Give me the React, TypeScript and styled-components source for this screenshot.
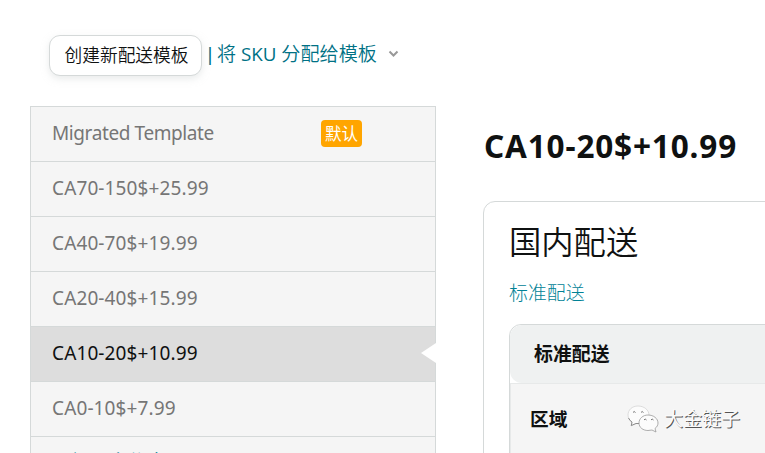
import React from "react";
import styled, { createGlobalStyle } from "styled-components";

const Global = createGlobalStyle`
  * { box-sizing: border-box; }
  html, body, #root { height: 100%; }
  body { margin: 0; background: #fff; overflow: hidden; color: #0f1111; font-family: "Noto Sans", "Noto Sans CJK SC", sans-serif; }
  h1, h2, h3, p, ul { margin: 0; padding: 0; }
`;

const Page = styled.div`
  width: 765px; height: 453px; overflow: hidden;
  display: flex; flex-direction: column; padding-left: 30px;
`;
const Toolbar = styled.header`
  flex: none; height: 106px; padding: 35px 0 0 19px; display: flex; align-items: flex-start;
`;
const CreateButton = styled.button`
  width: 153px; height: 41px; padding: 0 0 4px 2px; border: 1px solid #d5d9d9; border-radius: 11px;
  background: #fff; box-shadow: 0 3px 7px rgba(213, 217, 217, 0.5);
  font: 350 17.7px "Noto Sans CJK SC", sans-serif; color: #0f1111; white-space: nowrap;
`;
const AssignLink = styled.a`
  display: flex; align-items: center; height: 37px; margin-left: 7px;
  color: #007185; font-size: 19.1px; font-weight: 350;
`;
const Divider = styled.span`width: 8px; text-indent: -4px; line-height: 28px; font-size: 18px; font-weight: 500;`;
const LinkText = styled.span`white-space: pre; line-height: 28px;`;
const Latin = styled.span`font-family: "Open Sans", sans-serif; font-weight: 400; font-size: 18.8px;`;
const Chevron = styled.svg`margin-left: 11px;`;

const Main = styled.main`flex: 1; min-height: 0; display: flex; align-items: flex-start;`;
const TemplateList = styled.ul`
  width: 406px; flex: none; list-style: none; border: 1px solid #d5d9d9; border-bottom: 0;
`;
const TemplateItem = styled.li<{ $active?: boolean }>`
  position: relative; height: 55px; padding: 0 73px 2px 21px; display: flex; align-items: center;
  justify-content: space-between; border-bottom: 1px solid #d5d9d9; font-size: 19px;
  background: ${(p) => (p.$active ? "#dddddd" : "#f5f5f5")};
  color: ${(p) => (p.$active ? "#0f1111" : "#767676")};
`;
const ItemName = styled.span<{ $words?: boolean }>`
  letter-spacing: ${(p) => (p.$words ? "-0.4px" : "0.12px")};
`;
const MoreLink = styled.a`color: #008296; font-weight: 350; font-size: 19px; line-height: 28px; padding-bottom: 3px;`;
const Badge = styled.span`
  width: 41px; height: 27px; border-radius: 4px; background: #ffa500; color: #fff;
  font: 400 16.5px/26px "Noto Sans CJK SC", sans-serif; text-align: center; margin-top: 1px;
`;
const Pointer = styled.svg`position: absolute; right: -1px; top: 16px;`;

const Detail = styled.section`flex: 1; min-width: 0; padding-left: 47px;`;
const Title = styled.h1`
  height: 95px; padding-left: 1px; font-size: 31.5px; line-height: 79px; font-weight: 700; letter-spacing: 0.85px; white-space: nowrap;
`;
const Panel = styled.div`
  width: 320px; height: 300px; padding: 18px 0 0 25px; border: 1px solid #d5d9d9; border-radius: 12px;
`;
const PanelTitle = styled.h2`font-size: 32.3px; line-height: 42px; font-weight: 350;`;
const ServiceName = styled.p`
  font-size: 18.9px; line-height: 28px; margin-top: 17px; font-weight: 300; color: #008296;
`;
const RateTable = styled.div`
  height: 200px; margin-top: 17px; border: 1px solid #d5d9d9; border-radius: 12px 0 0 0; overflow: hidden;
`;
const RateHeader = styled.h3`
  height: 58px; padding-left: 24px; background: #eff1f1; border-radius: 12px 0 0 12px;
  font-size: 18.9px; line-height: 58px; font-weight: 700;
`;
const RateRow = styled.div`
  height: 140px; padding: 0 0 0 19px; display: flex; align-items: flex-start; background: #f5f5f5;
  border-top: 1px solid #e7e9e9; border-left: 1px solid #e7e9e9; line-height: 70px;
`;
const RegionLabel = styled.strong`width: 97px; font-size: 18.7px;`;
const Watermark = styled.div`
  display: flex; align-items: center; height: 70px; gap: 5px;
  font: 400 19px "Noto Sans CJK SC", sans-serif; color: #fafafa;
  text-shadow: 1px 1px 0.5px #555;
`;
const WatermarkName = styled.span`margin-top: -4px;`;

const templates = [
  { name: "Migrated Template", isDefault: true },
  { name: "CA70-150$+25.99" },
  { name: "CA40-70$+19.99" },
  { name: "CA20-40$+15.99" },
  { name: "CA10-20$+10.99", active: true },
  { name: "CA0-10$+7.99" },
];

function ChatLogo() {
  return (
    <svg width="32" height="28" viewBox="0 0 32 28" fill="#fcfcfc" stroke="#777" strokeWidth="0.8">
      <path d="M11 1C5 1 1 5 1 10c0 3 1.400 5.500 4 7L4 21l5-2.500c7 1 13-3 13-8.500C22 5 17 1 11 1Z" stroke="#d4d4d4" />
      <path d="M1.500 13Q3 16 5 17L4.300 20.500 9 18.500h3" fill="none" />
      <path d="M21 10c-5 0-9 3.500-9 8s4 7.500 9 7.500l4-.5 4 2-1-3.500c2-1.500 3-3.500 3-5.500 0-4.500-4.500-8-10-8Z" stroke="#999" />
      <path d="M6 7.500q1-2 2.500 0M14 7.500q1-2 2.500 0M17 15q1-2 2.500 0M24 15q1-2 2.500 0" fill="none" strokeWidth="1" />
    </svg>
  );
}

export default function App() {
  return (
    <Page>
      <Global />
      <Toolbar>
        <CreateButton>创建新配送模板</CreateButton>
        <AssignLink>
          <Divider>|</Divider>
          <LinkText>将<Latin> SKU </Latin>分配给模板</LinkText>
          <Chevron width="11" height="8" viewBox="0 0 11 8" fill="none" stroke="#999" strokeWidth="2">
            <path d="M1.500 1.500l4 4 4-4" />
          </Chevron>
        </AssignLink>
      </Toolbar>
      <Main>
        <TemplateList>
          {templates.map((t) => (
            <TemplateItem key={t.name} $active={t.active}>
              <ItemName $words={t.isDefault}>{t.name}</ItemName>
              {t.isDefault && <Badge>默认</Badge>}
              {t.active && (
                <Pointer width="16" height="20" viewBox="0 0 16 20"><path d="M16 0v20L1 10Z" fill="#fff" /></Pointer>
              )}
            </TemplateItem>
          ))}
          <TemplateItem><MoreLink>了解更多信息</MoreLink></TemplateItem>
        </TemplateList>
        <Detail>
          <Title>CA10-20$+10.99</Title>
          <Panel>
            <PanelTitle>国内配送</PanelTitle>
            <ServiceName>标准配送</ServiceName>
            <RateTable>
              <RateHeader>标准配送</RateHeader>
              <RateRow>
                <RegionLabel>区域</RegionLabel>
                <Watermark><ChatLogo /><WatermarkName>大金链子</WatermarkName></Watermark>
              </RateRow>
            </RateTable>
          </Panel>
        </Detail>
      </Main>
    </Page>
  );
}
